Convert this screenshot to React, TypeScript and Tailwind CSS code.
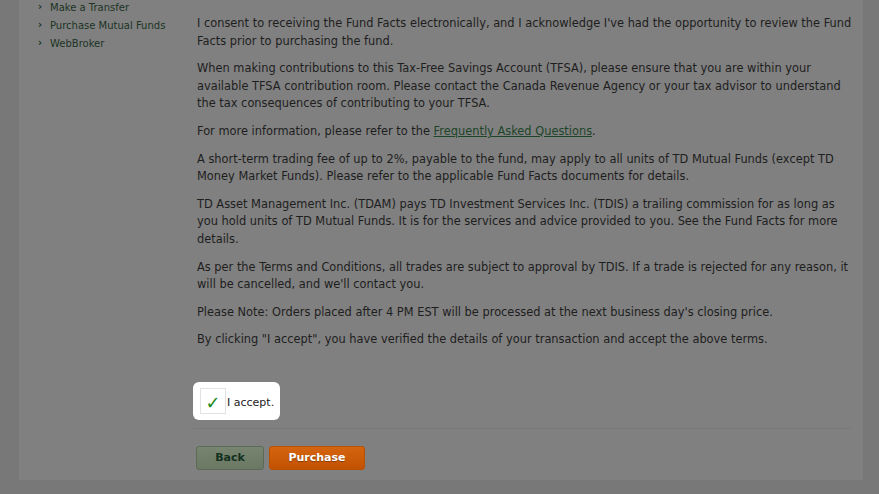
import React from "react";

const B = () => <br />;

const paras: React.ReactNode[] = [
  <>
    I consent to receiving the Fund Facts electronically, and I acknowledge I've had the opportunity to review the Fund
    <B />
    Facts prior to purchasing the fund.
  </>,
  <>
    When making contributions to this Tax-Free Savings Account (TFSA), please ensure that you are within your
    <B />
    available TFSA contribution room. Please contact the Canada Revenue Agency or your tax advisor to understand
    <B />
    the tax consequences of contributing to your TFSA.
  </>,
  <>
    For more information, please refer to the{" "}
    <a className="text-[#1d4529] underline" href="#">
      Frequently Asked Questions
    </a>
    .
  </>,
  <>
    A short-term trading fee of up to 2%, payable to the fund, may apply to all units of TD Mutual Funds (except TD
    <B />
    Money Market Funds). Please refer to the applicable Fund Facts documents for details.
  </>,
  <>
    TD Asset Management Inc. (TDAM) pays TD Investment Services Inc. (TDIS) a trailing commission for as long as
    <B />
    you hold units of TD Mutual Funds. It is for the services and advice provided to you. See the Fund Facts for more
    <B />
    details.
  </>,
  <>
    As per the Terms and Conditions, all trades are subject to approval by TDIS. If a trade is rejected for any reason, it
    <B />
    will be cancelled, and we'll contact you.
  </>,
  "Please Note: Orders placed after 4 PM EST will be processed at the next business day's closing price.",
  'By clicking "I accept", you have verified the details of your transaction and accept the above terms.',
];

const links = ["Make a Transfer", "Purchase Mutual Funds", "WebBroker"];

export default function App() {
  return (
    <div
      className="w-[879px] h-[494px] overflow-hidden bg-[#787878] text-[#1e1e1e]"
      style={{ fontFamily: '"DejaVu Sans", Verdana, sans-serif' }}
    >
      <div className="ml-[19px] w-[844px] h-[480px] bg-[#808080] flex">
        <div className="w-[178px] shrink-0 pl-[19px] -mt-[2px]">
          {links.map((l) => (
            <div key={l} className="flex items-center h-[18px] text-[10px] text-[#1b3424]">
              <span className="w-[12px] text-[10px] font-bold leading-none">›</span>
              <span>{l}</span>
            </div>
          ))}
        </div>
        <div className="w-[656px] pt-[15px] flex flex-col">
          {paras.map((p, i) => (
            <p key={i} className="text-[11.4px] leading-[17.6px] mb-[10px] whitespace-nowrap">
              {p}
            </p>
          ))}
          <div className="mt-[23px] -ml-[4px] w-[87px] h-[38px] bg-white rounded-[6px] flex items-center pl-[7px]">
            <div className="w-[26px] h-[26px] border border-[#e2e2e2] flex items-center justify-center text-[#1a8a1a] text-[18px] font-bold leading-none pt-[4px]">
              ✓
            </div>
            <span className="text-[11px] text-[#222] ml-[1px] pt-[5px]">I accept.</span>
          </div>
          <div className="mt-[8px] -ml-[4px] w-[658px] h-px bg-[#797979]" />
          <div className="mt-[17px] flex gap-[5px] -ml-[1px]">
            <button className="w-[68px] h-[24px] rounded-[3px] border border-[#5b6a55] bg-gradient-to-b from-[#768470] to-[#6a7864] text-[#14301f] text-[11px] font-bold">
              Back
            </button>
            <button
              className="w-[96px] h-[24px] rounded-[3px] border border-[#b95000] bg-gradient-to-b from-[#d4640f] to-[#c25200] text-white text-[11px] font-bold"
              style={{ textShadow: "0 1px 1px rgba(0,0,0,0.35)" }}
            >
              Purchase
            </button>
          </div>
        </div>
      </div>
    </div>
  );
}
